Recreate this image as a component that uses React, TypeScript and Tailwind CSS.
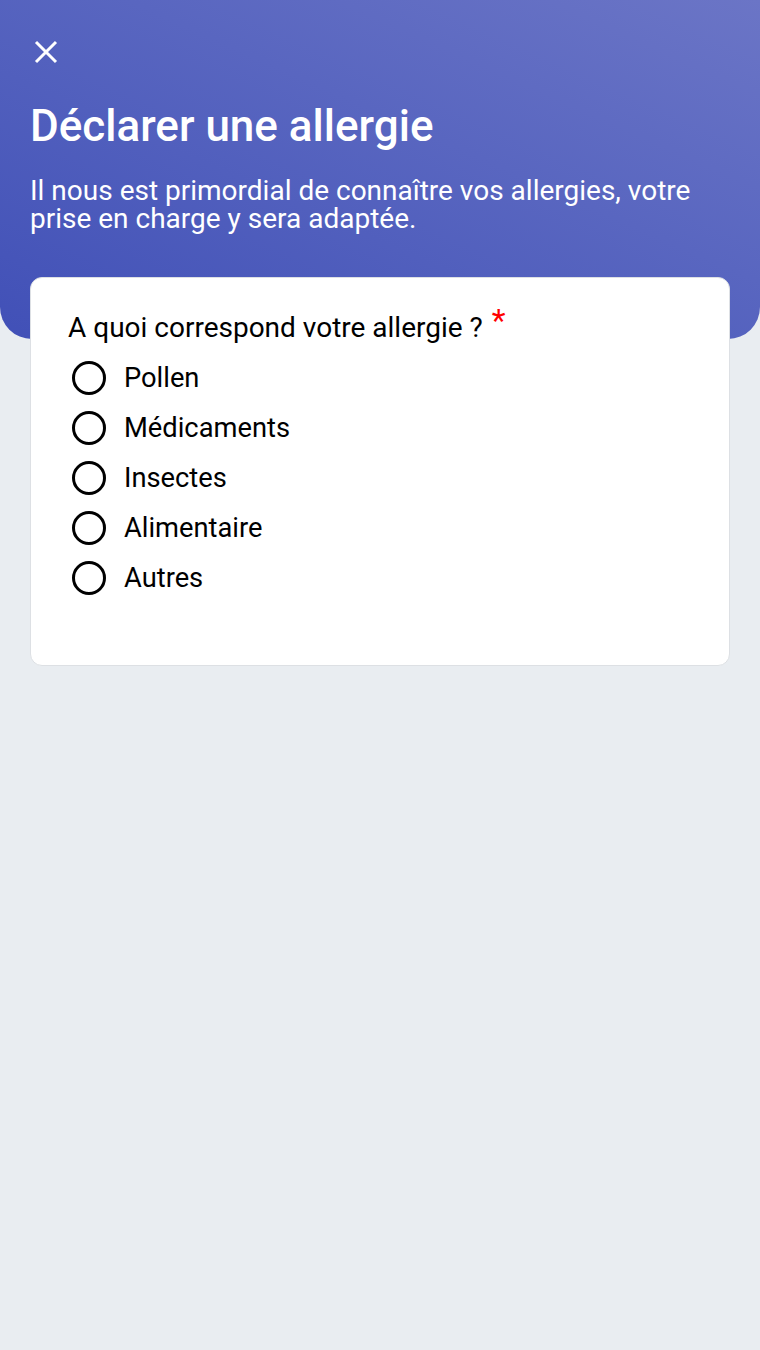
import { useState } from 'react';

const OPTIONS = ['Pollen', 'Médicaments', 'Insectes', 'Alimentaire', 'Autres'];

function CloseIcon() {
  return (
    <svg width="24" height="24" viewBox="0 0 24 24" aria-hidden>
      <path d="M2 2 L22 22 M22 2 L2 22" stroke="white" strokeWidth="3" strokeLinecap="butt" />
    </svg>
  );
}

export default function App() {
  const [choix, setChoix] = useState<string | null>(null);

  return (
    <div className="min-h-[1350px] bg-[#e9edf1] font-['Roboto',sans-serif]">
      <div className="h-[339px] rounded-b-[32px] bg-linear-to-tr from-[#4150b7] to-[#6b75c6] px-[30px] pt-[40px] text-white">
        <button type="button" aria-label="Fermer" className="ml-[4px] block">
          <CloseIcon />
        </button>
        <h1 className="mt-[37px] text-[44px] leading-[50px] font-medium">Déclarer une allergie</h1>
        <p className="mt-[26px] text-[28px] leading-[28px]">
          Il nous est primordial de connaître vos allergies, votre prise en charge y sera adaptée.
        </p>
      </div>

      <div className="mx-[30px] -mt-[62px] rounded-[12px] border border-[#dde0e4] bg-white px-[37px] pt-[32px] pb-[62px]">
        <div className="flex text-[28px] leading-[36px] text-black">
          A quoi correspond votre allergie ?
          <span className="ml-[9px] -mt-[8px] text-[32px] text-[#ff0000]">*</span>
        </div>
        <div className="mt-[7px] flex flex-col" role="radiogroup">
          {OPTIONS.map((o) => (
            <button
              key={o}
              type="button"
              role="radio"
              aria-checked={choix === o}
              onClick={() => setChoix(o)}
              className="flex h-[50px] items-center gap-[18px] pl-[4px] text-left"
            >
              <span className="flex h-[34px] w-[34px] items-center justify-center rounded-full border-[3px] border-black">
                {choix === o && <span className="h-[16px] w-[16px] rounded-full bg-black" />}
              </span>
              <span className="text-[27.3px] text-black">{o}</span>
            </button>
          ))}
        </div>
      </div>
    </div>
  );
}
